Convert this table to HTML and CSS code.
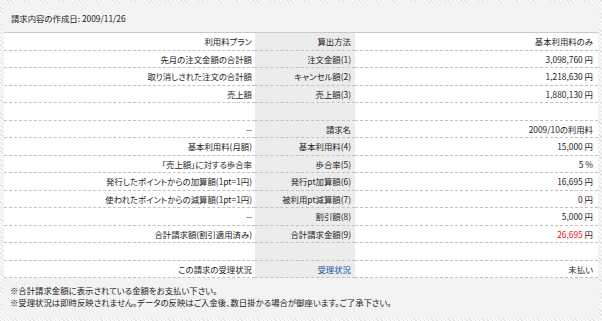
FILE: index.html
```html
<!DOCTYPE html>
<html lang="ja">
<head>
<meta charset="utf-8">
<title>請求内容</title>
<link rel="stylesheet" href="styles.css">
</head>
<body>
<div class="panel">
  <div class="panel-head">請求内容の作成日: 2009/11/26</div>
  <div class="bill">
    <div class="c lbl">利用料プラン</div><div class="c key">算出方法</div><div class="c val">基本利用料のみ</div>
    <div class="c lbl">先月の注文金額の合計額</div><div class="c key">注文金額(1)</div><div class="c val">3,098,760 円</div>
    <div class="c lbl">取り消しされた注文の合計額</div><div class="c key">キャンセル額(2)</div><div class="c val">1,218,630 円</div>
    <div class="c lbl">売上額</div><div class="c key">売上額(3)</div><div class="c val">1,880,130 円</div>
    <div class="c lbl"></div><div class="c key"></div><div class="c val"></div>
    <div class="c lbl">--</div><div class="c key">請求名</div><div class="c val">2009/10の利用料</div>
    <div class="c lbl">基本利用料(月額)</div><div class="c key">基本利用料(4)</div><div class="c val">15,000 円</div>
    <div class="c lbl">「売上額」に対する歩合率</div><div class="c key">歩合率(5)</div><div class="c val">5 %</div>
    <div class="c lbl">発行したポイントからの加算額(1pt=1円)</div><div class="c key">発行pt加算額(6)</div><div class="c val">16,695 円</div>
    <div class="c lbl">使われたポイントからの減算額(1pt=1円)</div><div class="c key">被利用pt減算額(7)</div><div class="c val">0 円</div>
    <div class="c lbl">--</div><div class="c key">割引額(8)</div><div class="c val">5,000 円</div>
    <div class="c lbl">合計請求額(割引適用済み)</div><div class="c key">合計請求金額(9)</div><div class="c val"><span class="total">26,695</span>&nbsp;円</div>
    <div class="c lbl"></div><div class="c key"></div><div class="c val"></div>
    <div class="c lbl">この請求の受理状況</div><div class="c key"><a class="link" href="#">受理状況</a></div><div class="c val">未払い</div>
  </div>
  <div class="notes">
    <p>※合計請求金額に表示されている金額をお支払い下さい。</p>
    <p>※受理状況は即時反映されません。データの反映はご入金後、数日掛かる場合が御座います。ご了承下さい。</p>
  </div>
</div>
</body>
</html>
```
FILE: styles.css
```css
html, body {
  margin: 0;
  padding: 0;
}
body {
  width: 602px;
  height: 321px;
  overflow: hidden;
  background: repeating-linear-gradient(45deg, #e4e4e4 0 1px, #f9f9f9 1px 3px);
  font-family: "Noto Sans CJK JP", "Noto Sans", sans-serif;
  font-size: 8.4px;
  font-feature-settings: "palt";
  color: #222;
}
.panel {
  margin: 3px 3px 0 3px;
  width: 596px;
  padding: 0 1px 10px 1px;
  box-sizing: border-box;
  background: #f3f3f3;
}
.panel-head {
  height: 29px;
  display: flex;
  align-items: center;
  padding-left: 7px;
}
.bill {
  display: grid;
  grid-template-columns: 251px 100px 1fr;
  grid-auto-rows: 17.5px;
  border-top: 1px solid #c9c9c9;
  background: #fff;
}
.c {
  display: flex;
  align-items: center;
  justify-content: flex-end;
  box-sizing: border-box;
  border-bottom: 1px dashed #c2c2c2;
  white-space: nowrap;
}
.lbl {
  padding-right: 3px;
}
.key {
  padding-right: 4px;
  background: #ececec;
}
.val {
  padding-right: 5px;
}
.total {
  color: #ee1111;
}
.link {
  color: #1750a8;
  text-decoration: none;
}
.notes {
  padding: 6px 0 0 6px;
  line-height: 12px;
}
.notes p {
  margin: 0;
}
```
